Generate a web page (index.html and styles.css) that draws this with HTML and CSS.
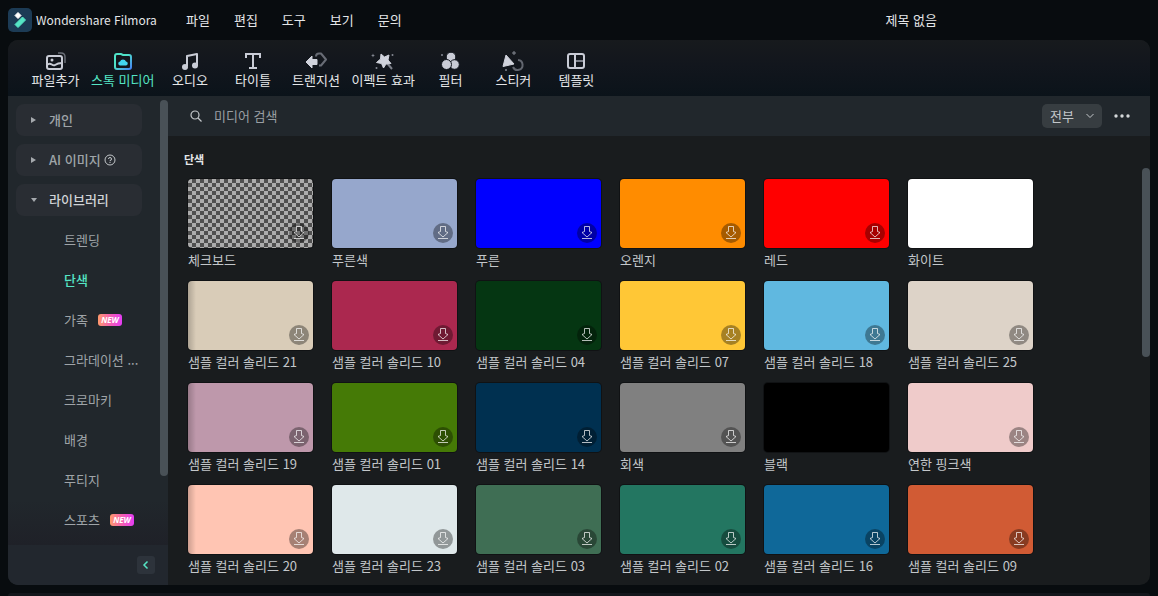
FILE: index.html
```
<!DOCTYPE html>
<html lang="ko">
<head>
  <meta charset="UTF-8">
  <meta name="viewport" content="width=device-width, initial-scale=1.0">
  <title>Wondershare Filmora</title>
  <link rel="stylesheet" href="styles.css">
</head>
<body>
  <header class="titlebar">
    <svg class="logo" viewBox="0 0 24 24">
      <rect width="24" height="24" rx="5" fill="#1c3b55"/>
      <path d="M10 4.500l3 3-3 3-3-3z" fill="#fff" stroke="#fff" stroke-linejoin="round"/>
      <path d="M14.500 9l3 3-7.500 7.500-3-3z" fill="#55e5c5" stroke="#55e5c5" stroke-linejoin="round"/>
    </svg>
    <span class="app-name">Wondershare Filmora</span>
    <nav class="menu">
      <button>파일</button>
      <button>편집</button>
      <button>도구</button>
      <button>보기</button>
      <button>문의</button>
    </nav>
    <span class="project-name">제목 없음</span>
  </header>

  <main class="panel">
    <nav class="toolbar">
      <button class="tool">
        <svg viewBox="0 0 24 20">
          <g fill="none" stroke="#c9ccd6" stroke-width="2">
            <rect x="3" y="5" width="15" height="13" rx="2"/>
            <path d="M3 14c4-4 5 2 8 0s4-2 7-2"/>
            <path d="M14 2h3q4 0 4 4v6" stroke="#686c75" stroke-width="1.500"/>
          </g>
          <circle cx="8" cy="9" r="1.500" fill="#c9ccd6"/>
        </svg>
        파일추가
      </button>
      <button class="tool active">
        <svg viewBox="0 0 24 20">
          <defs>
            <linearGradient id="folder" x1="0" y1="0" x2="1" y2="1">
              <stop offset="0.400" stop-color="#4fe3c8"/>
              <stop offset="1" stop-color="#4684f5"/>
            </linearGradient>
          </defs>
          <path d="M4 5q0-2 2-2h4l2 1h6q2 0 2 2v10q0 2-2 2H6q-2 0-2-2z" fill="none" stroke="url(#folder)" stroke-width="2"/>
          <path d="M9.500 14.500a2 2 0 0 1-.500-4 3.200 3.200 0 0 1 6 0 2 2 0 0 1-.500 4z" fill="#43d5f0"/>
        </svg>
        스톡 미디어
      </button>
      <button class="tool">
        <svg viewBox="0 0 24 20">
          <path d="M9 15V5l10-2v11" fill="none" stroke="#c9ccd6" stroke-width="2" stroke-linejoin="round"/>
          <circle cx="7" cy="16" r="3" fill="#c9ccd6"/>
          <circle cx="17" cy="14.500" r="3" fill="#c9ccd6"/>
        </svg>
        오디오
      </button>
      <button class="tool">
        <svg viewBox="0 0 24 20">
          <path d="M5 7V3h14v4M12 3v14M8 17h8" fill="none" stroke="#c9ccd6" stroke-width="2"/>
        </svg>
        타이틀
      </button>
      <button class="tool">
        <svg viewBox="0 0 24 20">
          <path d="M12 5.500q0-3 3-3h2l5 6-5 6h-2" fill="none" stroke="#686c75" stroke-width="2" stroke-linejoin="round"/>
          <path d="M8 5v3.500h5v5H8V17l-6-6z" fill="#d0d3dc" stroke="#d0d3dc" stroke-linejoin="round"/>
        </svg>
        트랜지션
      </button>
      <button class="tool">
        <svg viewBox="0 0 24 20">
          <path d="M16 12l5 6" stroke="#7c808a" stroke-width="2"/>
          <path d="M10 3l3.500 3L18 4l-1 5 3 3.500-5 .500-2.500 4-2-4.500-5-1 4-3.500z" fill="#d0d3dc" stroke="#d0d3dc" stroke-linejoin="round"/>
          <g fill="#858993">
            <path d="M2 2.500l.600 1.400 1.400.600-1.400.600L2 6.500l-.600-1.400L0 4.500l1.400-.600z"/>
            <circle cx="21.500" cy="4" r="1"/>
            <circle cx="5.500" cy="17" r="1"/>
          </g>
        </svg>
        이펙트 효과
      </button>
      <button class="tool">
        <svg viewBox="0 0 24 20">
          <g fill="#c9ccd6" stroke="#11161d">
            <circle cx="13" cy="6" r="4.800"/>
            <circle cx="16.500" cy="13.500" r="4.800"/>
            <circle cx="8.500" cy="13.500" r="5"/>
          </g>
          <circle cx="4" cy="4" r="1" fill="#858993"/>
        </svg>
        필터
      </button>
      <button class="tool">
        <svg viewBox="0 0 24 20">
          <path d="M17 9a5 5 0 1 1-5 7" fill="none" stroke="#62666f" stroke-width="2"/>
          <path d="M5 4l8 9-11 2.500z" fill="#d0d3dc" stroke="#d0d3dc" stroke-linejoin="round"/>
          <path d="M13 0v4M11 2h4" stroke="#858993"/>
          <circle cx="5" cy="19" r="1" fill="#858993"/>
        </svg>
        스티커
      </button>
      <button class="tool">
        <svg viewBox="0 0 24 20">
          <rect x="4" y="3" width="16" height="14" rx="2" fill="none" stroke="#c9ccd6" stroke-width="2"/>
          <path d="M11 3v14" stroke="#c9ccd6" stroke-width="2"/>
          <path d="M12 10h7" stroke="#7c808a" stroke-width="2"/>
        </svg>
        템플릿
      </button>
    </nav>

    <div class="workspace">
      <aside class="sidebar">
        <div class="sidebar-body">
          <nav class="categories">
            <button class="group"><span class="arrow"></span>개인</button>
            <button class="group"><span class="arrow"></span>AI 이미지
              <svg class="help" viewBox="0 0 12 12" fill="none" stroke="#c3c7ca">
                <circle cx="6" cy="6" r="5"/>
                <path d="M4.500 5a1.500 1.500 0 1 1 1.500 1.500v.700M6 8v1"/>
              </svg>
            </button>
            <button class="group open"><span class="arrow"></span>라이브러리</button>
            <a class="item" href="#">트렌딩</a>
            <a class="item current" href="#">단색</a>
            <a class="item" href="#">가족 <span class="new">NEW</span></a>
            <a class="item" href="#">그라데이션 ...</a>
            <a class="item" href="#">크로마키</a>
            <a class="item" href="#">배경</a>
            <a class="item" href="#">푸티지</a>
            <a class="item" href="#">스포츠 <span class="new">NEW</span></a>
          </nav>
          <div class="scroll side-scroll"><div class="thumb"></div></div>
        </div>
        <div class="sidebar-footer">
          <button class="collapse" aria-label="접기">
            <svg viewBox="0 0 10 10"><path d="M6.500 1.500L3 5l3.500 3.500" fill="none" stroke="#55e5c5" stroke-width="1.500"/></svg>
          </button>
        </div>
      </aside>

      <section class="content">
        <div class="searchbar">
          <svg class="search-icon" viewBox="0 0 12 12" fill="none" stroke="#c3c7ca" stroke-width="1.200">
            <circle cx="5" cy="5" r="4"/>
            <path d="M8 8l3.500 3.500"/>
          </svg>
          <input type="text" class="search" placeholder="미디어 검색" aria-label="미디어 검색">
          <div class="filter">
            <select aria-label="필터">
              <option>전부</option>
            </select>
            <svg viewBox="0 0 8 6"><path d="M.500 1L4 4.500 7.500 1" fill="none" stroke="#c3c7ca"/></svg>
          </div>
          <button class="more" aria-label="더 보기">
            <svg viewBox="0 0 16 4" fill="#d5d8da"><circle cx="2" cy="2" r="1.700"/><circle cx="8" cy="2" r="1.700"/><circle cx="14" cy="2" r="1.700"/></svg>
          </button>
        </div>
        <div class="results">
          <div class="library">
            <h2>단색</h2>
            <ul class="grid" id="grid"></ul>
          </div>
          <div class="scroll main-scroll"><div class="thumb"></div></div>
        </div>
      </section>
    </div>
  </main>
  <div class="timeline"></div>

  <script src="script.js"></script>
</body>
</html>
```
FILE: script.js
```
const colors = [
  { name: '체크보드', checker: true },
  { name: '푸른색', color: '#96a7cc' },
  { name: '푸른', color: '#0000ff' },
  { name: '오렌지', color: '#ff8c00' },
  { name: '레드', color: '#ff0000' },
  { name: '화이트', color: '#ffffff', saved: true },
  { name: '샘플 컬러 솔리드 21', color: '#d9ccb8', shaded: true },
  { name: '샘플 컬러 솔리드 10', color: '#ab284f' },
  { name: '샘플 컬러 솔리드 04', color: '#053612' },
  { name: '샘플 컬러 솔리드 07', color: '#ffc736' },
  { name: '샘플 컬러 솔리드 18', color: '#60b8e0' },
  { name: '샘플 컬러 솔리드 25', color: '#ddd3c8' },
  { name: '샘플 컬러 솔리드 19', color: '#be98ab', shaded: true },
  { name: '샘플 컬러 솔리드 01', color: '#457a06' },
  { name: '샘플 컬러 솔리드 14', color: '#003050' },
  { name: '회색', color: '#808080' },
  { name: '블랙', color: '#000000', saved: true },
  { name: '연한 핑크색', color: '#efcbca' },
  { name: '샘플 컬러 솔리드 20', color: '#ffc5b3', shaded: true },
  { name: '샘플 컬러 솔리드 23', color: '#dfe8ea' },
  { name: '샘플 컬러 솔리드 03', color: '#3f6e54' },
  { name: '샘플 컬러 솔리드 02', color: '#237661' },
  { name: '샘플 컬러 솔리드 16', color: '#0f6899' },
  { name: '샘플 컬러 솔리드 09', color: '#d15b34' }
];

const downloadButton = `
  <button class="download" aria-label="다운로드">
    <svg viewBox="0 0 20 20" fill="none" stroke="currentColor">
      <path d="M7.500 3.500h5v5l2.500 1-5 4.500-5-4.500 2.500-1z"/>
      <path d="M5 15.500h10"/>
    </svg>
  </button>`;

const grid = document.getElementById('grid');
colors.forEach(item => {
  const li = document.createElement('li');
  const style = item.color ? `style="background-color: ${item.color}"` : '';
  li.innerHTML = `
    <div class="swatch ${item.checker ? 'checker' : ''} ${item.shaded ? 'shaded' : ''}" ${style}>${item.saved ? '' : downloadButton}</div>
    <p>${item.name}</p>
  `;
  grid.appendChild(li);
});
```
FILE: styles.css
```
* {
  box-sizing: border-box;
}
body {
  margin: 0;
  height: 100vh;
  display: flex;
  flex-direction: column;
  overflow: hidden;
  background-color: #080c0f;
  color: #e4e6e8;
  font-family: "Noto Sans CJK KR", sans-serif;
  font-size: 13px;
  line-height: 16px;
}
button, input, select {
  font: inherit;
  color: inherit;
  background: none;
  border: none;
  padding: 0;
}
button {
  cursor: pointer;
}
svg {
  display: block;
  flex: none;
  overflow: visible;
}
.titlebar {
  flex: none;
  height: 40px;
  display: flex;
  align-items: center;
  padding-left: 8px;
}
.logo {
  width: 24px;
  height: 24px;
}
.app-name {
  width: 150px;
  padding-left: 4px;
  font-size: 12px;
}
.menu {
  display: flex;
  gap: 24px;
  padding-left: 4px;
}
.project-name {
  margin-left: auto;
  margin-right: 221px;
}
.panel {
  flex: 1;
  min-height: 0;
  display: flex;
  flex-direction: column;
  margin: 0 8px;
  border-radius: 10px;
  overflow: hidden;
  background-color: #191c1e;
}
.toolbar {
  flex: none;
  height: 56px;
  display: flex;
  padding: 11px 16px 0;
  background: linear-gradient(#171a1d, #12161d 45%, #0b131a);
}
.tool {
  min-width: 63px;
  height: 40px;
  display: flex;
  flex-direction: column;
  align-items: center;
  gap: 1px;
  padding: 0 4px;
  white-space: nowrap;
}
.tool svg {
  width: 24px;
  height: 20px;
}
.tool.active {
  color: #55e5c5;
}
.workspace {
  flex: 1;
  min-height: 0;
  display: flex;
}
.sidebar {
  flex: none;
  width: 160px;
  display: flex;
  flex-direction: column;
  background-color: #21272c;
}
.sidebar-body {
  flex: 1;
  min-height: 0;
  display: flex;
  background: linear-gradient(#21272c 90%, #1f2128);
}
.categories {
  flex: 1;
  min-width: 0;
  display: flex;
  flex-direction: column;
  gap: 8px;
  padding: 8px 18px 0 8px;
  overflow: hidden;
}
.group, .item {
  flex: none;
  height: 32px;
  display: flex;
  align-items: center;
  color: #9fa4a8;
  white-space: nowrap;
}
.group {
  padding-left: 15px;
  border-radius: 8px;
  background-color: #292d33;
  font-weight: 500;
}
.group.open {
  color: #d0d3d6;
}
.arrow {
  width: 18px;
}
.arrow::before {
  content: "";
  display: block;
  width: 5px;
  height: 6px;
  background-color: #a5a9ad;
  clip-path: polygon(0 0, 100% 50%, 0 100%);
}
.open .arrow::before {
  width: 6px;
  height: 4px;
  clip-path: polygon(0 0, 100% 0, 50% 100%);
}
.help {
  width: 12px;
  height: 12px;
  margin-left: 3px;
}
.item {
  padding-left: 48px;
  text-decoration: none;
}
.item.current {
  color: #55e5c5;
  font-weight: 500;
}
.new {
  width: 24px;
  margin-left: 10px;
  border-radius: 3px;
  background: linear-gradient(90deg, #ff9a6c, #f45fb0 50%, #e43cf5);
  color: #fff;
  font: italic bold 8px/12px "Open Sans", sans-serif;
  text-align: center;
}
.scroll {
  flex: none;
  width: 8px;
}
.thumb {
  border-radius: 4px;
  background-color: #495157;
}
.side-scroll {
  padding-top: 4px;
}
.side-scroll .thumb {
  height: 376px;
}
.sidebar-footer {
  flex: none;
  height: 40px;
  display: flex;
  align-items: center;
  justify-content: flex-end;
  padding-right: 13px;
  background-color: #22272e;
}
.collapse {
  width: 18px;
  height: 18px;
  display: flex;
  align-items: center;
  justify-content: center;
  border-radius: 3px;
  background-color: #2d333b;
}
.collapse svg {
  width: 10px;
  height: 10px;
}
.content {
  flex: 1;
  min-width: 0;
  display: flex;
  flex-direction: column;
}
.searchbar {
  flex: none;
  height: 40px;
  display: flex;
  align-items: center;
  padding: 0 20px 0 22px;
  background-color: #21272c;
}
.search-icon {
  width: 12px;
  height: 12px;
}
.search {
  flex: 1;
  min-width: 0;
  padding-left: 12px;
  outline: none;
}
.search::placeholder {
  color: #9a9fa3;
}
.filter {
  position: relative;
}
.filter select {
  appearance: none;
  width: 60px;
  height: 24px;
  padding-left: 8px;
  border-radius: 5px;
  background-color: #373d41;
  color: #c3c7ca;
}
.filter svg {
  position: absolute;
  top: 9px;
  right: 8px;
  width: 8px;
  height: 6px;
  pointer-events: none;
}
.more {
  margin-left: 12px;
}
.more svg {
  width: 16px;
  height: 4px;
}
.results {
  flex: 1;
  min-height: 0;
  display: flex;
}
.library {
  flex: 1;
  min-width: 0;
  padding: 15px 16px 0;
  overflow: hidden;
}
.library h2 {
  margin: 0 0 12px;
  font-size: 11px;
  font-weight: bold;
  line-height: 16px;
}
.grid {
  list-style: none;
  margin: 0;
  padding: 0 4px;
  display: grid;
  grid-template-columns: repeat(auto-fill, 125px);
  gap: 13px 19px;
}
.swatch {
  height: 69px;
  display: flex;
  align-items: flex-end;
  justify-content: flex-end;
  padding: 5px 4px;
  border-radius: 4px;
  box-shadow: 0 0 0 1px #101214;
}
.checker {
  background: repeating-conic-gradient(#4f4f4f 0 25%, #acacac 0 50%) 0 0 / 8px 8px;
}
.shaded {
  background-image: linear-gradient(90deg, rgba(0, 0, 0, 0.2), transparent 8px);
}
.download {
  width: 20px;
  height: 20px;
  border-radius: 50%;
  background-color: rgba(0, 0, 0, 0.35);
  color: rgba(255, 255, 255, 0.7);
}
.grid p {
  margin: 4px 0 0;
  color: #c3c7ca;
  white-space: nowrap;
}
.main-scroll {
  padding-top: 32px;
}
.main-scroll .thumb {
  height: 189px;
}
.timeline {
  flex: none;
  height: 3px;
  margin: 8px 8px 0;
  border-radius: 10px 10px 0 0;
  background-color: #13161b;
}
```
